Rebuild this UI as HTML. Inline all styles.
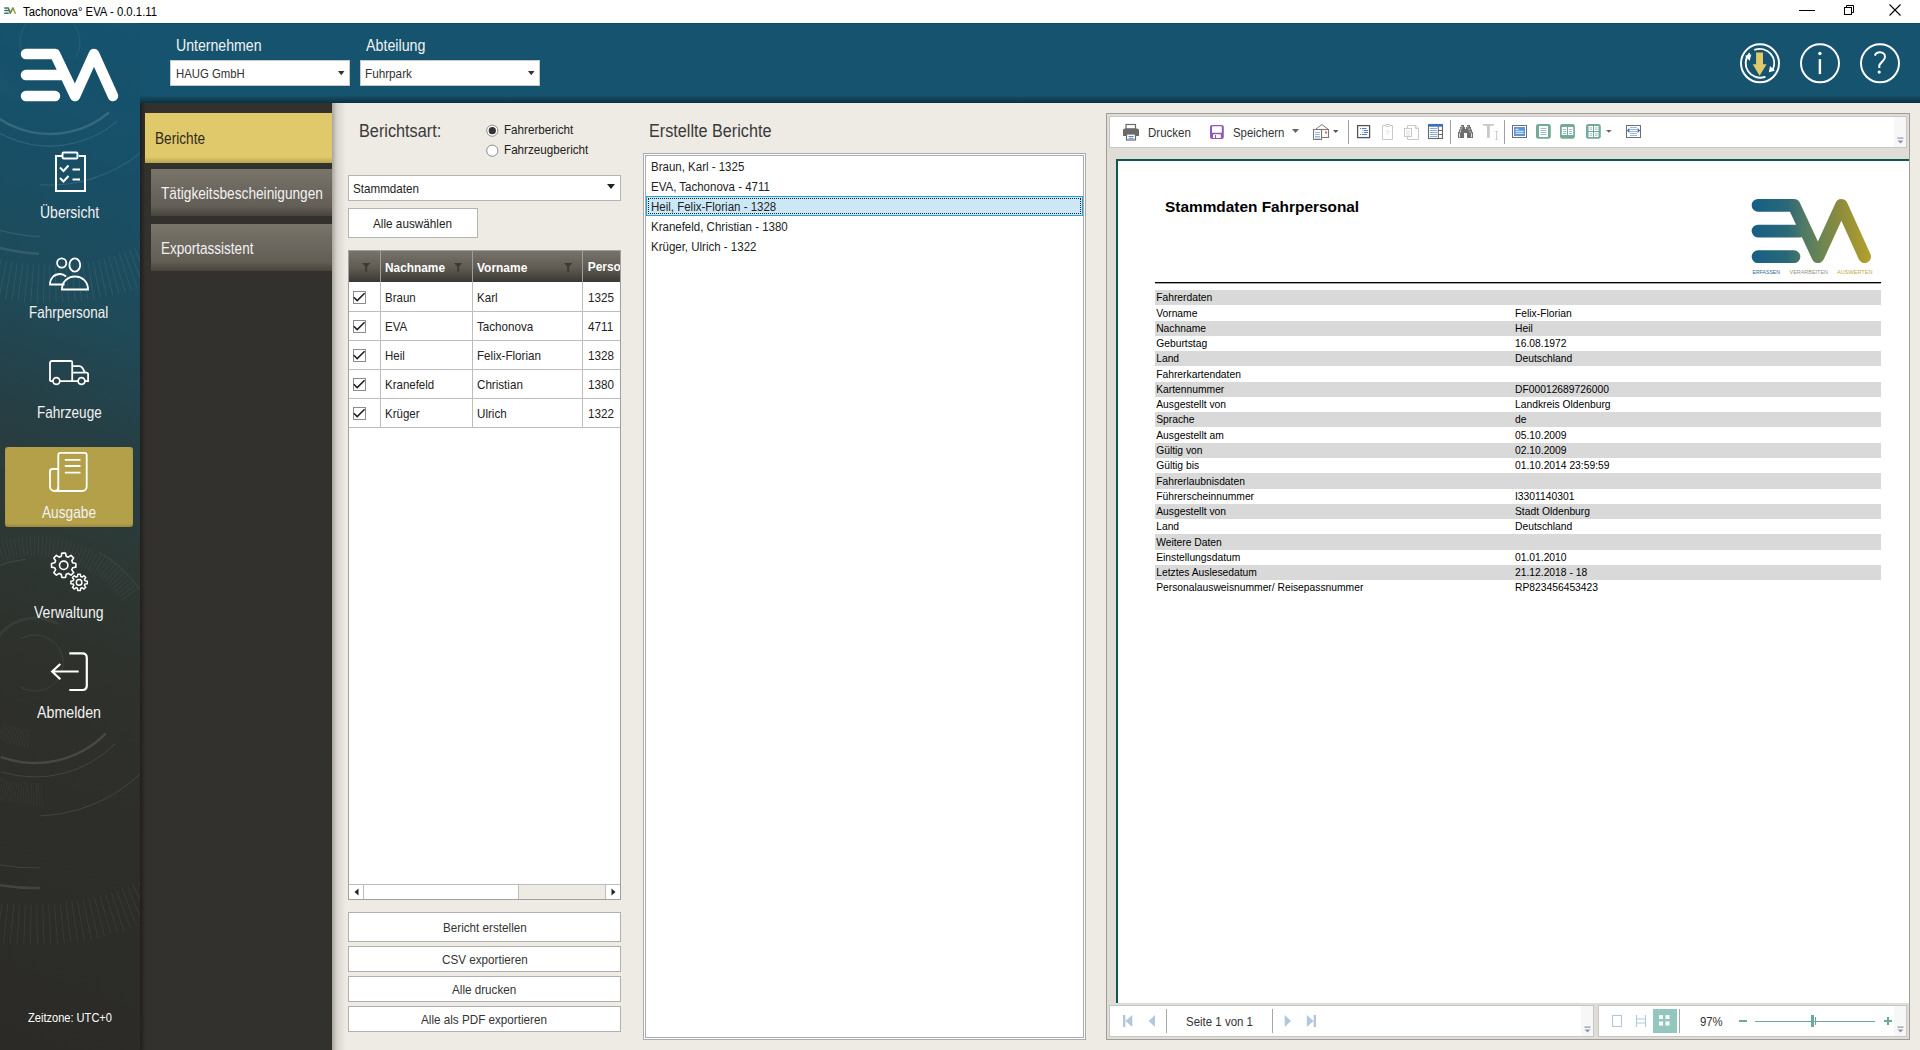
<!DOCTYPE html>
<html><head><meta charset="utf-8">
<style>
*{margin:0;padding:0;box-sizing:border-box}
html,body{width:1920px;height:1050px;overflow:hidden;background:#eeebe5;font-family:"Liberation Sans",sans-serif;}
.a{position:absolute}
.t{position:absolute;white-space:nowrap;line-height:1}
svg{overflow:visible}
</style></head><body>
<div class="a" style="left:0px;top:0px;width:1920px;height:23px;background:#fff"></div>
<div class="a" style="left:0px;top:23px;width:1920px;height:80px;background:#15536e"></div>
<div class="a" style="left:0px;top:23px;width:1920px;height:1px;background:#0f4a61"></div>
<div class="a" style="left:140px;top:95px;width:1780px;height:8px;background:linear-gradient(#17546e,#103f52 60%,#0b3242)"></div>
<div class="a" style="left:0px;top:23px;width:140px;height:1027px;background:linear-gradient(200deg,#15536e 0px,#175069 130px,#1f4a58 290px,#263f45 400px,#2d3834 510px,#2e302b 640px,#2b2a27 1013px)"></div>
<svg class="a" style="left:0px;top:0px;clip-path:inset(23px 0 0 0)" width="140" height="1050" viewBox="0 0 140 1050"><g><path d="M24.0 57.0A30 30 0 1 1 76.0 57.0" fill="none" stroke="#fff" stroke-opacity="0.07" stroke-width="1"/><path d="M13.3 94.4A64 64 0 0 1 -13.8 36.4" fill="none" stroke="#fff" stroke-opacity="0.05" stroke-width="12" stroke-dasharray="0.7 2.2"/><path d="M109.1 112.5A92 92 0 0 1 -40.6 58.0" fill="none" stroke="#fff" stroke-opacity="0.14" stroke-width="2.4"/><path d="M116.8 121.7A104 104 0 0 1 -50.5 68.9" fill="none" stroke="#fff" stroke-opacity="0.12" stroke-width="1.1"/><path d="M140.0 153.1A143 143 0 0 1 40.0 184.7" fill="none" stroke="#fff" stroke-opacity="0.11" stroke-width="1.1"/><path d="M39.8 236.7A195 195 0 0 1 -16.7 225.2" fill="none" stroke="#fff" stroke-opacity="0.1" stroke-width="1.2"/><path d="M38.9 253.7A212 212 0 0 1 -22.5 241.2" fill="none" stroke="#fff" stroke-opacity="0.11" stroke-width="2.5"/><path d="M188.8 240.2A242 242 0 0 1 -12.6 275.8" fill="none" stroke="#fff" stroke-opacity="0.08" stroke-width="38" stroke-dasharray="0.9 5"/><path d="M197.7 16.0A150 150 0 0 1 191.0 93.3" fill="none" stroke="#fff" stroke-opacity="0.07" stroke-width="1"/><path d="M-66.3 604.5A117 117 0 0 1 130.8 595.9" fill="none" stroke="#fff" stroke-opacity="0.06" stroke-width="20" stroke-dasharray="0.8 3"/><path d="M-68.6 653.9A104 104 0 0 1 25.9 559.4" fill="none" stroke="#fff" stroke-opacity="0.09" stroke-width="1"/><path d="M99.0 552.1A128 128 0 0 1 158.6 696.1" fill="none" stroke="#fff" stroke-opacity="0.09" stroke-width="1"/><path d="M151.3 581.6A142 142 0 0 1 163.7 723.0" fill="none" stroke="#fff" stroke-opacity="0.08" stroke-width="1"/><path d="M21.0 638.8A28 28 0 1 1 21.0 687.2" fill="none" stroke="#fff" stroke-opacity="0.08" stroke-width="1"/><path d="M-9.3 655.2A45 45 0 0 1 57.5 624.0" fill="none" stroke="#fff" stroke-opacity="0.05" stroke-width="3"/><path d="M28.4 738.7A76 76 0 0 1 -0.7 730.1" fill="none" stroke="#fff" stroke-opacity="0.06" stroke-width="18" stroke-dasharray="0.6 2"/><path d="M105.7 733.7A100 100 0 0 1 0.8 757.0" fill="none" stroke="#fff" stroke-opacity="0.12" stroke-width="2.5"/><path d="M115.6 743.6A114 114 0 0 1 1.7 772.0" fill="none" stroke="#fff" stroke-opacity="0.1" stroke-width="1"/><path d="M41.9 793.8A131 131 0 0 1 -3.3 788.3" fill="none" stroke="#fff" stroke-opacity="0.06" stroke-width="22" stroke-dasharray="0.6 2"/><path d="M167.5 739.5A153 153 0 0 1 40.3 815.9" fill="none" stroke="#fff" stroke-opacity="0.1" stroke-width="1"/><path d="M40.4 867.9A205 205 0 0 1 -0.6 864.9" fill="none" stroke="#fff" stroke-opacity="0.09" stroke-width="1"/><path d="M40.1 887.9A225 225 0 0 1 -4.1 884.6" fill="none" stroke="#fff" stroke-opacity="0.11" stroke-width="2.5"/><path d="M185.3 877.6A262 262 0 0 1 -1.5 922.5" fill="none" stroke="#fff" stroke-opacity="0.07" stroke-width="40" stroke-dasharray="0.8 5.5"/></g></svg>
<div class="a" style="left:140px;top:103px;width:192px;height:947px;background:#33312d"></div>
<div class="a" style="left:140px;top:103px;width:5px;height:947px;background:linear-gradient(90deg,#221f1d,#2a2724 60%,#33312d)"></div>
<div class="a" style="left:332px;top:103px;width:1588px;height:947px;background:#eeebe5"></div>
<div class="a" style="left:332px;top:103px;width:14px;height:947px;background:linear-gradient(90deg,#a9a59c,#d8d5ce 35%,#eeebe5)"></div>
<div class="t" style="left:23.00px;top:6.00px;font-size:12.71px;color:#000;font-weight:normal;transform:scaleX(0.8933);transform-origin:0 0;">Tachonova° EVA - 0.0.1.11</div>
<svg class="a" style="left:0px;top:0px;" width="20" height="20" viewBox="0 0 20 20"><defs><linearGradient id="tg" x1="4" y1="0" x2="16" y2="0" gradientUnits="userSpaceOnUse"><stop offset="0" stop-color="#2f6f8c"/><stop offset="0.45" stop-color="#4f7a58"/><stop offset="0.7" stop-color="#7d8a3a"/><stop offset="1" stop-color="#b6a432"/></linearGradient></defs><path d="M4.8 7.9H8.3L10.3 13.2L12.9 7.9L15.3 13.2M4.8 10.6H9.3M4.8 13.2H8.3" fill="none" stroke="url(#tg)" stroke-width="1.5" stroke-linecap="round" stroke-linejoin="round"/></svg>
<div class="a" style="left:1799px;top:10px;width:16px;height:1px;background:#000"></div>
<svg class="a" style="left:1844px;top:5px;" width="11" height="11" viewBox="0 0 11 11"><rect x="0.5" y="2.5" width="7" height="7" fill="none" stroke="#000"/><path d="M2.5 2.5V0.5H9.5V7.5H7.5" fill="none" stroke="#000"/></svg>
<svg class="a" style="left:1889px;top:4px;" width="12" height="12" viewBox="0 0 12 12"><path d="M0.5 0.5L11.5 11.5M11.5 0.5L0.5 11.5" stroke="#000" stroke-width="1.1"/></svg>
<svg class="a" style="left:0px;top:23px;" width="140" height="80" viewBox="0 0 140 80"><path d="M26 31H55L75 73L94 31L113 73M26 52H65M26 73H55" fill="none" stroke="#fff" stroke-width="10.5" stroke-linecap="round" stroke-linejoin="round"/></svg>
<div class="t" style="left:175.50px;top:38.00px;font-size:15.86px;color:#f2f2f2;font-weight:normal;transform:scaleX(0.8898);transform-origin:0 0;">Unternehmen</div>
<div class="t" style="left:365.60px;top:38.00px;font-size:15.86px;color:#f2f2f2;font-weight:normal;transform:scaleX(0.8982);transform-origin:0 0;">Abteilung</div>
<div class="a" style="left:170px;top:60px;width:180px;height:26px;background:#fff;border:1px solid #c9c9c9"></div>
<div class="t" style="left:175.60px;top:68.00px;font-size:12.57px;color:#333;font-weight:normal;transform:scaleX(0.9043);transform-origin:0 0;">HAUG GmbH</div>
<svg class="a" style="left:337.5px;top:70.5px;" width="8" height="5" viewBox="0 0 8 5"><path d="M0 0H6.5L3.25 4.3Z" fill="#333"/></svg>
<div class="a" style="left:360px;top:60px;width:180px;height:26px;background:#fff;border:1px solid #c9c9c9"></div>
<div class="t" style="left:365.00px;top:68.00px;font-size:12.57px;color:#333;font-weight:normal;transform:scaleX(0.9330);transform-origin:0 0;">Fuhrpark</div>
<svg class="a" style="left:527.5px;top:70.5px;" width="8" height="5" viewBox="0 0 8 5"><path d="M0 0H6.5L3.25 4.3Z" fill="#333"/></svg>
<svg class="a" style="left:1739px;top:42px;" width="42" height="42" viewBox="0 0 42 42"><circle cx="21" cy="21.3" r="19" fill="none" stroke="#fff" stroke-width="2"/></svg>
<svg class="a" style="left:1799px;top:42px;" width="42" height="42" viewBox="0 0 42 42"><circle cx="21" cy="21.3" r="19" fill="none" stroke="#fff" stroke-width="2"/></svg>
<svg class="a" style="left:1859px;top:42px;" width="42" height="42" viewBox="0 0 42 42"><circle cx="21" cy="21.3" r="19" fill="none" stroke="#fff" stroke-width="2"/></svg>
<svg class="a" style="left:1739px;top:42px;" width="42" height="42" viewBox="0 0 42 42"><g transform="translate(0,0.45)"><path d="M16.04 7.22A14.5 14.5 0 0 1 33.9 27" fill="none" stroke="#fff" stroke-width="1.9" stroke-linecap="round"/><path d="M29.8 29.8L31 23.5 35.8 28.3Z" fill="#fff"/><path d="M25.72 34.56A14.5 14.5 0 0 1 10.2 11.3" fill="none" stroke="#fff" stroke-width="1.9" stroke-linecap="round"/><path d="M12.3 12L6 13.3 10.6 18.4Z" fill="#fff"/><path d="M17.1 10.1H24V21.8H27.6L20.6 33.4 13.7 21.8H17.1Z" fill="#e0c96a"/></g></svg>
<svg class="a" style="left:1799px;top:42px;" width="42" height="42" viewBox="0 0 42 42"><circle cx="20.9" cy="11.5" r="1.7" fill="#fff"/><rect x="19.7" y="17.2" width="2.4" height="14.9" fill="#fff"/></svg>
<svg class="a" style="left:1859px;top:42px;" width="42" height="42" viewBox="0 0 42 42"><path d="M15.9 13.6C16.6 11.2 18.5 10.3 21 10.3C23.9 10.3 26 12.2 26 14.9C26 18.2 22.3 19.5 20.3 23.2V25.9" fill="none" stroke="#fff" stroke-width="2"/><circle cx="20.2" cy="30.1" r="1.6" fill="#fff"/></svg>
<div class="a" style="left:5px;top:447px;width:128px;height:80px;background:#b3a048;border-radius:3px;box-shadow:inset 0 -2px 2px rgba(0,0,0,0.12)"></div>
<svg class="a" style="left:50px;top:148px;" width="40" height="48" viewBox="0 0 40 48"><path d="M12 8H6V43H35V8H29" fill="none" stroke="#fff" stroke-width="2"/><rect x="12.5" y="4.5" width="15" height="6" rx="1.2" fill="none" stroke="#fff" stroke-width="2"/><path d="M10 19.5L13.5 23 18.5 17.5M10 30L13.5 33.5 18.5 28" fill="none" stroke="#fff" stroke-width="2"/><path d="M22.5 21.5H30M22.5 31.5H30" stroke="#fff" stroke-width="2"/></svg>
<div class="t" style="left:39.70px;top:205.00px;font-size:15.86px;color:#f2f2f2;font-weight:normal;transform:scaleX(0.8823);transform-origin:0 0;">Übersicht</div>
<svg class="a" style="left:45px;top:250px;" width="50" height="45" viewBox="0 0 50 45"><circle cx="16.7" cy="13" r="4.6" fill="none" stroke="#fff" stroke-width="1.8"/><ellipse cx="29.8" cy="15" rx="5.4" ry="6.6" fill="none" stroke="#fff" stroke-width="1.8"/><path d="M21 26.5C19 24.5 17 24 15 24C9 24 5 28.5 5 34.5H19.5" fill="none" stroke="#fff" stroke-width="1.8"/><path d="M17 39.5C17 32 22.5 26.5 30 26.5C37.5 26.5 43 32 43 39.5Z" fill="none" stroke="#fff" stroke-width="1.8"/></svg>
<div class="t" style="left:29.40px;top:305.00px;font-size:15.86px;color:#f2f2f2;font-weight:normal;transform:scaleX(0.8486);transform-origin:0 0;">Fahrpersonal</div>
<svg class="a" style="left:45px;top:355px;" width="50" height="35" viewBox="0 0 50 35"><path d="M5 26.2V8C5 6.8 5.8 6 7 6H26C26.8 6 27.2 6.6 27.2 7.5V26.2" fill="none" stroke="#fff" stroke-width="1.8"/><path d="M27.2 11.2H34.5C36 11.2 37 12 37.8 13.5L40 17.6H41.5C42.5 17.6 43.1 18.5 43.1 19.5V26.2H40M33 26.2H15M8 26.2H5M27.2 17.6H40" fill="none" stroke="#fff" stroke-width="1.8"/><circle cx="11.4" cy="26" r="3.4" fill="none" stroke="#fff" stroke-width="1.8"/><circle cx="36.5" cy="26" r="3.4" fill="none" stroke="#fff" stroke-width="1.8"/></svg>
<div class="t" style="left:36.70px;top:405.00px;font-size:15.86px;color:#f2f2f2;font-weight:normal;transform:scaleX(0.8533);transform-origin:0 0;">Fahrzeuge</div>
<svg class="a" style="left:45px;top:448px;" width="50" height="50" viewBox="0 0 50 50"><path d="M13.3 43V7C13.3 5.7 14.3 4.8 15.5 4.8H39.5C40.8 4.8 41.7 5.7 41.7 7V38.5C41.7 41 39.7 43 37.2 43H9.5C7 43 5 41 5 38.5V23.5C5 22 6 21 7.5 21H13.3" fill="none" stroke="#fff" stroke-width="1.8"/><path d="M13.3 38.5C13.3 41 11.5 43 9.5 43" fill="none" stroke="#fff" stroke-width="1.8"/><path d="M19.8 11.9H35.5M19.8 18H35.5M19.8 24.6H35.5" stroke="#fff" stroke-width="1.8"/></svg>
<div class="t" style="left:42.00px;top:505.00px;font-size:15.86px;color:#f2f2f2;font-weight:normal;transform:scaleX(0.8625);transform-origin:0 0;">Ausgabe</div>
<svg class="a" style="left:45px;top:545px;" width="55" height="60" viewBox="0 0 55 60"><path d="M27.66 17.82 L30.86 18.45 L30.86 22.15 L27.66 22.78 L26.79 24.88 L28.61 27.59 L25.99 30.21 L23.28 28.39 L21.18 29.26 L20.55 32.46 L16.85 32.46 L16.22 29.26 L14.12 28.39 L11.41 30.21 L8.79 27.59 L10.61 24.88 L9.74 22.78 L6.54 22.15 L6.54 18.45 L9.74 17.82 L10.61 15.72 L8.79 13.01 L11.41 10.39 L14.12 12.21 L16.22 11.34 L16.85 8.14 L20.55 8.14 L21.18 11.34 L23.28 12.21 L25.99 10.39 L28.61 13.01 L26.79 15.72Z" fill="none" stroke="#fff" stroke-width="1.6" stroke-linejoin="round"/><circle cx="18.7" cy="20.3" r="4.2" fill="none" stroke="#fff" stroke-width="1.6"/><path d="M39.98 35.77 L42.31 36.15 L42.31 38.65 L39.98 39.03 L39.41 40.41 L40.79 42.32 L39.02 44.09 L37.11 42.71 L35.73 43.28 L35.35 45.61 L32.85 45.61 L32.47 43.28 L31.09 42.71 L29.18 44.09 L27.41 42.32 L28.79 40.41 L28.22 39.03 L25.89 38.65 L25.89 36.15 L28.22 35.77 L28.79 34.39 L27.41 32.48 L29.18 30.71 L31.09 32.09 L32.47 31.52 L32.85 29.19 L35.35 29.19 L35.73 31.52 L37.11 32.09 L39.02 30.71 L40.79 32.48 L39.41 34.39Z" fill="none" stroke="#fff" stroke-width="1.5" stroke-linejoin="round"/><circle cx="34.1" cy="37.4" r="2.8" fill="none" stroke="#fff" stroke-width="1.5"/></svg>
<div class="t" style="left:34.00px;top:605.00px;font-size:15.86px;color:#f2f2f2;font-weight:normal;transform:scaleX(0.8857);transform-origin:0 0;">Verwaltung</div>
<svg class="a" style="left:45px;top:645px;" width="50" height="50" viewBox="0 0 50 50"><path d="M24.3 8.3H37.3C40 8.3 41.8 10 41.8 12.8V40.5C41.8 43.3 40 45 37.3 45H24.3" fill="none" stroke="#fff" stroke-width="2.2"/><path d="M33.7 26.5H7M15.3 19L7.2 26.5 15.3 34.3" fill="none" stroke="#fff" stroke-width="2.2"/></svg>
<div class="t" style="left:37.00px;top:705.00px;font-size:15.86px;color:#f2f2f2;font-weight:normal;transform:scaleX(0.8962);transform-origin:0 0;">Abmelden</div>
<div class="t" style="left:28.00px;top:1012.00px;font-size:12.71px;color:#fff;font-weight:normal;transform:scaleX(0.8716);transform-origin:0 0;">Zeitzone: UTC+0</div>
<div class="a" style="left:145px;top:113px;width:187px;height:50px;background:linear-gradient(180deg,#e0c96a 0,#e0c96a 88%,#b8a352 100%)"></div>
<div class="t" style="left:155.00px;top:131.00px;font-size:15.71px;color:#2e2a20;font-weight:normal;transform:scaleX(0.8680);transform-origin:0 0;">Berichte</div>
<div class="a" style="left:151px;top:169px;width:181px;height:47px;background:linear-gradient(180deg,#79746a 0%,#625e55 80%,#47443d 100%)"></div>
<div class="t" style="left:160.60px;top:186.00px;font-size:15.71px;color:#f2f2f2;font-weight:normal;transform:scaleX(0.8707);transform-origin:0 0;">Tätigkeitsbescheinigungen</div>
<div class="a" style="left:151px;top:224px;width:181px;height:47px;background:linear-gradient(180deg,#79746a 0%,#625e55 80%,#47443d 100%)"></div>
<div class="t" style="left:160.60px;top:241.00px;font-size:15.71px;color:#f2f2f2;font-weight:normal;transform:scaleX(0.8607);transform-origin:0 0;">Exportassistent</div>
<div class="t" style="left:358.75px;top:122.00px;font-size:18.71px;color:#3a3a3a;font-weight:normal;transform:scaleX(0.8703);transform-origin:0 0;">Berichtsart:</div>
<svg class="a" style="left:485px;top:124px;" width="14" height="14" viewBox="0 0 14 14"><circle cx="7.3" cy="6.7" r="5.6" fill="#fff" stroke="#8a8a8a" stroke-width="1"/><circle cx="7.3" cy="6.7" r="3.6" fill="#333"/></svg>
<div class="t" style="left:504.00px;top:124.00px;font-size:12.29px;color:#222;font-weight:normal;transform:scaleX(0.9489);transform-origin:0 0;">Fahrerbericht</div>
<svg class="a" style="left:485px;top:144px;" width="14" height="14" viewBox="0 0 14 14"><circle cx="7.3" cy="6.7" r="5.6" fill="#fff" stroke="#8a8a8a" stroke-width="1"/></svg>
<div class="t" style="left:504.00px;top:144.00px;font-size:12.29px;color:#222;font-weight:normal;transform:scaleX(0.9499);transform-origin:0 0;">Fahrzeugbericht</div>
<div class="a" style="left:348px;top:175px;width:273px;height:26px;background:#fff;border:1px solid #b4b4b4"></div>
<div class="t" style="left:353.30px;top:183.00px;font-size:12.57px;color:#222;font-weight:normal;transform:scaleX(0.9267);transform-origin:0 0;">Stammdaten</div>
<svg class="a" style="left:607px;top:184px;" width="9" height="6" viewBox="0 0 9 6"><path d="M0 0H8L4 5Z" fill="#222"/></svg>
<div class="a" style="left:348px;top:208px;width:130px;height:30px;background:#fff;border:1px solid #b4b4b4"></div>
<div class="t" style="left:373.30px;top:218.00px;font-size:12.57px;color:#222;font-weight:normal;transform:scaleX(0.9349);transform-origin:0 0;">Alle auswählen</div>
<div class="a" style="left:348px;top:250px;width:273px;height:650px;background:#fff;border:1px solid #a0a0a0"></div>
<div class="a" style="left:349px;top:251px;width:271px;height:31px;background:linear-gradient(180deg,#77726a 0%,#5f5b53 55%,#3b3833 100%)"></div>
<div class="a" style="left:380px;top:251px;width:1px;height:31px;background:#a09d98"></div>
<div class="a" style="left:472px;top:251px;width:1px;height:31px;background:#a09d98"></div>
<div class="a" style="left:582px;top:251px;width:1px;height:31px;background:#a09d98"></div>
<svg class="a" style="left:362px;top:263px;" width="10" height="10" viewBox="0 0 10 10"><path d="M0 0H8.4L5.2 3.6V8.7H3.2V3.6Z" fill="#3c3a36"/></svg>
<svg class="a" style="left:454px;top:263px;" width="10" height="10" viewBox="0 0 10 10"><path d="M0 0H8.4L5.2 3.6V8.7H3.2V3.6Z" fill="#3c3a36"/></svg>
<svg class="a" style="left:564px;top:263px;" width="10" height="10" viewBox="0 0 10 10"><path d="M0 0H8.4L5.2 3.6V8.7H3.2V3.6Z" fill="#3c3a36"/></svg>
<div class="t" style="left:385.00px;top:262.00px;font-size:12.57px;color:#fff;font-weight:bold;transform:scaleX(0.9443);transform-origin:0 0;">Nachname</div>
<div class="t" style="left:477.00px;top:262.00px;font-size:12.57px;color:#fff;font-weight:bold;transform:scaleX(0.9522);transform-origin:0 0;">Vorname</div>
<div class="a" style="left:583px;top:251px;width:37px;height:32px;overflow:hidden"><div class="t" style="left:4.7px;top:10.83px;font-size:11.96px;color:#fff;font-weight:bold">Personalnummer</div></div>
<div class="a" style="left:349px;top:311px;width:271px;height:1px;background:#bdbdbd"></div>
<div class="a" style="left:380px;top:282px;width:1px;height:30px;background:#bdbdbd"></div>
<div class="a" style="left:472px;top:282px;width:1px;height:30px;background:#bdbdbd"></div>
<div class="a" style="left:582px;top:282px;width:1px;height:30px;background:#bdbdbd"></div>
<svg class="a" style="left:353px;top:291px;" width="14" height="14" viewBox="0 0 14 14"><rect x="0.5" y="0.5" width="12" height="12" fill="#fff" stroke="#8c8c8c"/><path d="M0.8 6.3L4.2 9.6 11.6 2.3" fill="none" stroke="#1e1e1e" stroke-width="1.5"/></svg>
<div class="t" style="left:385.00px;top:292.00px;font-size:12.57px;color:#222;font-weight:normal;transform:scaleX(0.9150);transform-origin:0 0;">Braun</div>
<div class="t" style="left:477.00px;top:292.00px;font-size:12.57px;color:#222;font-weight:normal;transform:scaleX(0.9250);transform-origin:0 0;">Karl</div>
<div class="t" style="left:587.50px;top:292.00px;font-size:12.57px;color:#222;font-weight:normal;transform:scaleX(0.9300);transform-origin:0 0;">1325</div>
<div class="a" style="left:349px;top:340px;width:271px;height:1px;background:#bdbdbd"></div>
<div class="a" style="left:380px;top:311px;width:1px;height:30px;background:#bdbdbd"></div>
<div class="a" style="left:472px;top:311px;width:1px;height:30px;background:#bdbdbd"></div>
<div class="a" style="left:582px;top:311px;width:1px;height:30px;background:#bdbdbd"></div>
<svg class="a" style="left:353px;top:320px;" width="14" height="14" viewBox="0 0 14 14"><rect x="0.5" y="0.5" width="12" height="12" fill="#fff" stroke="#8c8c8c"/><path d="M0.8 6.3L4.2 9.6 11.6 2.3" fill="none" stroke="#1e1e1e" stroke-width="1.5"/></svg>
<div class="t" style="left:385.00px;top:321.00px;font-size:12.57px;color:#222;font-weight:normal;transform:scaleX(0.9150);transform-origin:0 0;">EVA</div>
<div class="t" style="left:477.00px;top:321.00px;font-size:12.57px;color:#222;font-weight:normal;transform:scaleX(0.9250);transform-origin:0 0;">Tachonova</div>
<div class="t" style="left:587.50px;top:321.00px;font-size:12.57px;color:#222;font-weight:normal;transform:scaleX(0.9300);transform-origin:0 0;">4711</div>
<div class="a" style="left:349px;top:369px;width:271px;height:1px;background:#bdbdbd"></div>
<div class="a" style="left:380px;top:340px;width:1px;height:30px;background:#bdbdbd"></div>
<div class="a" style="left:472px;top:340px;width:1px;height:30px;background:#bdbdbd"></div>
<div class="a" style="left:582px;top:340px;width:1px;height:30px;background:#bdbdbd"></div>
<svg class="a" style="left:353px;top:349px;" width="14" height="14" viewBox="0 0 14 14"><rect x="0.5" y="0.5" width="12" height="12" fill="#fff" stroke="#8c8c8c"/><path d="M0.8 6.3L4.2 9.6 11.6 2.3" fill="none" stroke="#1e1e1e" stroke-width="1.5"/></svg>
<div class="t" style="left:385.00px;top:350.00px;font-size:12.57px;color:#222;font-weight:normal;transform:scaleX(0.9150);transform-origin:0 0;">Heil</div>
<div class="t" style="left:477.00px;top:350.00px;font-size:12.57px;color:#222;font-weight:normal;transform:scaleX(0.9250);transform-origin:0 0;">Felix-Florian</div>
<div class="t" style="left:587.50px;top:350.00px;font-size:12.57px;color:#222;font-weight:normal;transform:scaleX(0.9300);transform-origin:0 0;">1328</div>
<div class="a" style="left:349px;top:398px;width:271px;height:1px;background:#bdbdbd"></div>
<div class="a" style="left:380px;top:369px;width:1px;height:30px;background:#bdbdbd"></div>
<div class="a" style="left:472px;top:369px;width:1px;height:30px;background:#bdbdbd"></div>
<div class="a" style="left:582px;top:369px;width:1px;height:30px;background:#bdbdbd"></div>
<svg class="a" style="left:353px;top:378px;" width="14" height="14" viewBox="0 0 14 14"><rect x="0.5" y="0.5" width="12" height="12" fill="#fff" stroke="#8c8c8c"/><path d="M0.8 6.3L4.2 9.6 11.6 2.3" fill="none" stroke="#1e1e1e" stroke-width="1.5"/></svg>
<div class="t" style="left:385.00px;top:379.00px;font-size:12.57px;color:#222;font-weight:normal;transform:scaleX(0.9150);transform-origin:0 0;">Kranefeld</div>
<div class="t" style="left:477.00px;top:379.00px;font-size:12.57px;color:#222;font-weight:normal;transform:scaleX(0.9250);transform-origin:0 0;">Christian</div>
<div class="t" style="left:587.50px;top:379.00px;font-size:12.57px;color:#222;font-weight:normal;transform:scaleX(0.9300);transform-origin:0 0;">1380</div>
<div class="a" style="left:349px;top:427px;width:271px;height:1px;background:#bdbdbd"></div>
<div class="a" style="left:380px;top:398px;width:1px;height:30px;background:#bdbdbd"></div>
<div class="a" style="left:472px;top:398px;width:1px;height:30px;background:#bdbdbd"></div>
<div class="a" style="left:582px;top:398px;width:1px;height:30px;background:#bdbdbd"></div>
<svg class="a" style="left:353px;top:407px;" width="14" height="14" viewBox="0 0 14 14"><rect x="0.5" y="0.5" width="12" height="12" fill="#fff" stroke="#8c8c8c"/><path d="M0.8 6.3L4.2 9.6 11.6 2.3" fill="none" stroke="#1e1e1e" stroke-width="1.5"/></svg>
<div class="t" style="left:385.00px;top:408.00px;font-size:12.57px;color:#222;font-weight:normal;transform:scaleX(0.9150);transform-origin:0 0;">Krüger</div>
<div class="t" style="left:477.00px;top:408.00px;font-size:12.57px;color:#222;font-weight:normal;transform:scaleX(0.9250);transform-origin:0 0;">Ulrich</div>
<div class="t" style="left:587.50px;top:408.00px;font-size:12.57px;color:#222;font-weight:normal;transform:scaleX(0.9300);transform-origin:0 0;">1322</div>
<div class="a" style="left:349px;top:884px;width:271px;height:15px;background:#eeebe5;border-top:1px solid #bdbdbd"></div>
<div class="a" style="left:349px;top:884px;width:15px;height:15px;background:#fff;border-right:1px solid #bdbdbd;border-top:1px solid #bdbdbd"></div>
<svg class="a" style="left:352px;top:887px;" width="10" height="10" viewBox="0 0 10 10"><path d="M6.5 1.5V8.5L2.5 5Z" fill="#222"/></svg>
<div class="a" style="left:364px;top:884px;width:155px;height:15px;background:#fff;border-top:1px solid #bdbdbd;border-right:1px solid #bdbdbd"></div>
<div class="a" style="left:605px;top:884px;width:15px;height:15px;background:#fff;border-top:1px solid #bdbdbd;border-left:1px solid #bdbdbd"></div>
<svg class="a" style="left:608px;top:887px;" width="10" height="10" viewBox="0 0 10 10"><path d="M3.5 1.5V8.5L7.5 5Z" fill="#222"/></svg>
<div class="a" style="left:348px;top:912px;width:273px;height:30px;background:#fff;border:1px solid #b0b0b0"></div>
<div class="t" style="left:442.52px;top:922.00px;font-size:12.57px;color:#333;font-weight:normal;transform:scaleX(0.9300);transform-origin:0 0;">Bericht erstellen</div>
<div class="a" style="left:348px;top:946px;width:273px;height:26px;background:#fff;border:1px solid #b0b0b0"></div>
<div class="t" style="left:441.54px;top:954.00px;font-size:12.57px;color:#333;font-weight:normal;transform:scaleX(0.9300);transform-origin:0 0;">CSV exportieren</div>
<div class="a" style="left:348px;top:976px;width:273px;height:26px;background:#fff;border:1px solid #b0b0b0"></div>
<div class="t" style="left:452.25px;top:984.00px;font-size:12.57px;color:#333;font-weight:normal;transform:scaleX(0.9300);transform-origin:0 0;">Alle drucken</div>
<div class="a" style="left:348px;top:1006px;width:273px;height:26px;background:#fff;border:1px solid #b0b0b0"></div>
<div class="t" style="left:421.41px;top:1014.00px;font-size:12.57px;color:#333;font-weight:normal;transform:scaleX(0.9300);transform-origin:0 0;">Alle als PDF exportieren</div>
<div class="t" style="left:648.90px;top:122.00px;font-size:18.86px;color:#3a3a3a;font-weight:normal;transform:scaleX(0.8586);transform-origin:0 0;">Erstellte Berichte</div>
<div class="a" style="left:643px;top:153px;width:443px;height:887px;background:#fff;border:1px solid #ababab"></div>
<div class="a" style="left:645px;top:155px;width:439px;height:883px;background:#fff;border:1px solid #a9acb4"></div>
<div class="a" style="left:646px;top:196px;width:437px;height:20px;background:#cce8f6;border:1px solid #26a0da"></div>
<div class="a" style="left:648px;top:198px;width:433px;height:16px;border:1px dotted #222"></div>
<div class="t" style="left:651.40px;top:161.00px;font-size:12.71px;color:#222;font-weight:normal;transform:scaleX(0.9050);transform-origin:0 0;">Braun, Karl - 1325</div>
<div class="t" style="left:651.40px;top:181.00px;font-size:12.71px;color:#222;font-weight:normal;transform:scaleX(0.9050);transform-origin:0 0;">EVA, Tachonova - 4711</div>
<div class="t" style="left:651.40px;top:201.00px;font-size:12.71px;color:#222;font-weight:normal;transform:scaleX(0.9050);transform-origin:0 0;">Heil, Felix-Florian - 1328</div>
<div class="t" style="left:651.40px;top:221.00px;font-size:12.71px;color:#222;font-weight:normal;transform:scaleX(0.9050);transform-origin:0 0;">Kranefeld, Christian - 1380</div>
<div class="t" style="left:651.40px;top:241.00px;font-size:12.71px;color:#222;font-weight:normal;transform:scaleX(0.9050);transform-origin:0 0;">Krüger, Ulrich - 1322</div>
<div class="a" style="left:1106px;top:113px;width:804px;height:927px;background:#e0ddd6;border:1px solid #a09d98"></div>
<div class="a" style="left:1109px;top:116px;width:798px;height:32px;background:#fff;border:1px solid #c6c6c6"></div>
<div class="a" style="left:1894px;top:117px;width:12px;height:30px;background:#f7f7f7"></div>
<svg class="a" style="left:1897px;top:137px;" width="8" height="8" viewBox="0 0 8 8"><rect x="0.5" y="0.5" width="6" height="1.2" fill="#8d96a8"/><path d="M0.5 3.5H6.5L3.5 6.5Z" fill="#8d96a8"/></svg>
<svg class="a" style="left:1122px;top:123px;" width="18" height="18" viewBox="0 0 18 18"><rect x="4" y="1.5" width="9.5" height="4.5" fill="#fff" stroke="#6a6a6a" stroke-width="1.2"/><path d="M3 5.5H15C16.2 5.5 17 6.3 17 7.5V13H14V11H4V13H1V7.5C1 6.3 1.8 5.5 3 5.5Z" fill="#6a6a6a"/><rect x="4.5" y="11" width="9" height="6" fill="#fff" stroke="#6a6a6a" stroke-width="1.2"/><path d="M6.5 13.5H11.5M6.5 15.3H11.5" stroke="#3b7bd0" stroke-width="0.9"/></svg>
<div class="t" style="left:1147.50px;top:127.00px;font-size:12.71px;color:#333;font-weight:normal;transform:scaleX(0.9048);transform-origin:0 0;">Drucken</div>
<svg class="a" style="left:1210px;top:125px;" width="14" height="14" viewBox="0 0 14 14"><rect x="0" y="0" width="13.8" height="13.9" rx="2" fill="#8e58b8"/><rect x="2" y="1.2" width="9.8" height="6.6" rx="0.6" fill="#fff"/><rect x="3" y="9.2" width="7.8" height="3.7" rx="0.5" fill="#fff"/><rect x="5" y="10" width="1" height="3" fill="#8e58b8"/></svg>
<div class="t" style="left:1233.00px;top:127.00px;font-size:12.71px;color:#333;font-weight:normal;transform:scaleX(0.8986);transform-origin:0 0;">Speichern</div>
<svg class="a" style="left:1292px;top:129px;" width="8" height="5" viewBox="0 0 8 5"><path d="M0 0H7L3.5 4Z" fill="#666"/></svg>
<svg class="a" style="left:1312px;top:123px;" width="18" height="18" viewBox="0 0 18 18"><path d="M3.5 6.5L9.8 1.5 16.5 6.5" fill="none" stroke="#7a7a7a" stroke-width="1"/><rect x="9.5" y="6.5" width="7" height="8" fill="#fff" stroke="#7a7a7a" stroke-width="1.1"/><rect x="1.5" y="6.5" width="8" height="10" fill="#fff" stroke="#7a7a7a" stroke-width="1.1"/><path d="M3 9.5H8M3 11.5H8M3 13.5H8M3 15H8" stroke="#7fa2d6" stroke-width="0.8"/><rect x="13" y="8.5" width="2" height="2" fill="#e8603c"/></svg>
<svg class="a" style="left:1333px;top:130px;" width="7" height="4" viewBox="0 0 7 4"><path d="M0 0H5.5L2.75 3Z" fill="#555"/></svg>
<div class="a" style="left:1348px;top:120px;width:1px;height:24px;background:#a0a0a0"></div>
<svg class="a" style="left:1356px;top:124px;" width="15" height="15" viewBox="0 0 15 15"><rect x="1.6" y="1.6" width="12" height="12" fill="#fff" stroke="#555" stroke-width="1.3"/><path d="M4 4.5H5M5.8 4.5H10.5M6.5 6.5H7.3M8 6.5H12M6.5 8.5H7.3M8 8.5H12M4 10.5H5M5.8 10.5H11" stroke="#3b6fc0" stroke-width="0.9"/></svg>
<svg class="a" style="left:1381px;top:123px;" width="14" height="18" viewBox="0 0 14 18"><path d="M1.5 2.5H4.5V1.5H8.5V2.5H11.5V16.5H1.5Z" fill="#fff" stroke="#cacaca" stroke-width="1"/><path d="M4.5 3.5H8.5" stroke="#cacaca"/><text x="4" y="12" font-size="8" fill="#c9d8ec" font-family="Liberation Sans">?</text></svg>
<svg class="a" style="left:1403px;top:124px;" width="17" height="17" viewBox="0 0 17 17"><path d="M4.5 1.5H12.5L15.5 4.5V15.5H4.5Z" fill="#fff" stroke="#cacaca" stroke-width="1"/><path d="M12.5 1.5V4.5H15.5" fill="none" stroke="#cacaca"/><rect x="1.5" y="4.5" width="7" height="8" fill="#fff" stroke="#cacaca" stroke-width="1"/><path d="M3 7H7M3 9H7M3 11H7" stroke="#c9d8ec" stroke-width="0.8"/></svg>
<svg class="a" style="left:1427px;top:123px;" width="17" height="17" viewBox="0 0 17 17"><rect x="1.5" y="1.5" width="14" height="14" fill="#fff" stroke="#666" stroke-width="1.1"/><rect x="1" y="1" width="15" height="2.7" fill="#3b6fc0"/><path d="M2.8 5.5H10M2.8 7.5H10M2.8 9.5H10M2.8 11.5H10M2.8 13.5H10" stroke="#7fa2d6" stroke-width="0.9"/><path d="M11.3 3.5V15.5M11.3 7.5H15.5M11.3 11.5H15.5" stroke="#666" stroke-width="1"/></svg>
<div class="a" style="left:1450px;top:120px;width:1px;height:24px;background:#a0a0a0"></div>
<svg class="a" style="left:1458px;top:125px;" width="15" height="13" viewBox="0 0 15 13"><path d="M3 0H6V2H7V4H8V2H9V0H12V2H13V4.5H14V7H15V13H9V8H6V13H0V7H1V4.5H2V2H3Z" fill="#6f6f6f"/><rect x="3.3" y="1.2" width="1.2" height="1.2" fill="#fff" opacity="0.8"/><rect x="9.3" y="1.2" width="1.2" height="1.2" fill="#fff" opacity="0.8"/><rect x="2.4" y="3.3" width="1.2" height="1.2" fill="#fff" opacity="0.8"/><rect x="10.6" y="3.3" width="1" height="2" fill="#fff" opacity="0.8"/><rect x="1.9" y="5.5" width="1" height="2" fill="#fff" opacity="0.8"/><rect x="11.6" y="6.3" width="1.2" height="1.2" fill="#fff" opacity="0.8"/><rect x="1" y="8.3" width="1" height="4" fill="#fff" opacity="0.8"/><rect x="13" y="8.3" width="1" height="4" fill="#fff" opacity="0.8"/></svg>
<svg class="a" style="left:1482px;top:123px;" width="17" height="17" viewBox="0 0 17 17"><path d="M1 1H11.8V2.7H7.8V14.8H5V2.7H1Z" fill="#c8c8c8"/><path d="M13.3 8.5H15.8M13.3 16.5H15.8M14.55 8.5V16.5" stroke="#c0c0c0" stroke-width="0.8"/></svg>
<div class="a" style="left:1504px;top:120px;width:1px;height:24px;background:#a0a0a0"></div>
<svg class="a" style="left:1512px;top:125px;" width="15" height="13" viewBox="0 0 15 13"><rect x="0.5" y="0.5" width="14" height="12" fill="#fff" stroke="#6e6e6e" stroke-width="1"/><rect x="2" y="2" width="11" height="9" fill="#5b97dc"/><path d="M3.5 4.3H6.5M3.5 6.3H11.5M3.5 8.3H11.5" stroke="#fff" stroke-width="0.9"/></svg>
<svg class="a" style="left:1536px;top:124px;" width="15" height="15" viewBox="0 0 15 15"><rect x="0" y="0" width="14.8" height="14.8" rx="2.4" fill="#73ab96"/><rect x="3" y="2" width="9" height="11" fill="#fff"/><path d="M4.6 4.5H10.4M4.6 6.5H10.4M4.6 8.5H10.4M4.6 10.5H10.4" stroke="#8aa4c8" stroke-width="0.8"/></svg>
<svg class="a" style="left:1560px;top:124px;" width="15" height="15" viewBox="0 0 15 15"><rect x="0" y="0" width="14.9" height="14.8" rx="2.4" fill="#73ab96"/><rect x="1.8" y="3" width="5.2" height="8" fill="#fff"/><rect x="8" y="3" width="5.2" height="8" fill="#fff"/><path d="M2.8 5.5H6M2.8 7.5H6M2.8 9.5H6M9 5.5H12.2M9 7.5H12.2M9 9.5H12.2" stroke="#8aa4c8" stroke-width="0.8"/></svg>
<svg class="a" style="left:1586px;top:124px;" width="15" height="15" viewBox="0 0 15 15"><rect x="0" y="0" width="14.8" height="14.8" rx="2.4" fill="#73ab96"/><rect x="2.5" y="2" width="4.5" height="5" fill="#fff"/><rect x="8" y="2" width="4.5" height="5" fill="#fff"/><rect x="2.5" y="8" width="4.5" height="5" fill="#fff"/><rect x="8" y="8" width="4.5" height="5" fill="#fff"/><path d="M3.5 3.8H6M3.5 5.3H6M9 3.8H11.5M9 5.3H11.5M3.5 9.8H6M3.5 11.3H6M9 9.8H11.5M9 11.3H11.5" stroke="#8aa4c8" stroke-width="0.7"/></svg>
<svg class="a" style="left:1606px;top:130px;" width="7" height="4" viewBox="0 0 7 4"><path d="M0 0H5.7L2.85 2.8Z" fill="#666"/></svg>
<svg class="a" style="left:1626px;top:125px;" width="15" height="13" viewBox="0 0 15 13"><rect x="0.5" y="0.5" width="14" height="12" fill="#fff" stroke="#6e6e6e" stroke-width="1"/><path d="M4 2.5H11M3.5 4.5H11.5M3.5 6.5H11.5M4 8.5H11M4 10.5H11" stroke="#8fb0dc" stroke-width="0.9"/><path d="M0.8 5.5L3.4 3V8ZM14.2 5.5L11.6 3V8Z" fill="#3b6fc0"/></svg>
<div class="a" style="left:1116px;top:159px;width:793px;height:844px;background:#fff;border-left:2px solid #12574f;border-top:2px solid #12574f"></div>
<div class="t" style="left:1165.00px;top:198.71px;font-size:15.4px;color:#000;font-weight:bold;">Stammdaten Fahrpersonal</div>
<svg class="a" style="left:1748px;top:195px;" width="130" height="85" viewBox="0 0 130 85"><defs><linearGradient id="lg" x1="1751" y1="0" x2="1871" y2="0" gradientUnits="userSpaceOnUse"><stop offset="0" stop-color="#155f86"/><stop offset="0.3" stop-color="#2a6878"/><stop offset="0.45" stop-color="#527b63"/><stop offset="0.6" stop-color="#6e8650"/><stop offset="0.75" stop-color="#8d8d3c"/><stop offset="1" stop-color="#b5a02c"/></linearGradient></defs><g transform="translate(-1748,-195)"><path d="M1758 205.3H1794L1818 256.7L1841.4 205.3L1864.6 256.7M1758 231.1H1800M1758 256.7H1794" fill="none" stroke="url(#lg)" stroke-width="12.7" stroke-linecap="round" stroke-linejoin="round"/><text x="1752.5" y="274" font-size="5.2" fill="#2d6b8c" textLength="27.5" lengthAdjust="spacingAndGlyphs" font-family="Liberation Sans">ERFASSEN</text><text x="1789.5" y="274" font-size="5.2" fill="#8c9a82" textLength="38.5" lengthAdjust="spacingAndGlyphs" font-family="Liberation Sans">VERARBEITEN</text><text x="1837" y="274" font-size="5.2" fill="#c2ac4c" textLength="35.5" lengthAdjust="spacingAndGlyphs" font-family="Liberation Sans">AUSWERTEN</text></g></svg>
<div class="a" style="left:1155px;top:282px;width:726px;height:1px;background:#000"></div>
<div class="a" style="left:1155px;top:282.5px;width:726px;height:1px;background:rgba(0,0,0,0.35)"></div>
<div class="a" style="left:1155px;top:290.00px;width:726px;height:15.275px;background:#d9d9d9"></div>
<div class="t" style="left:1156.20px;top:293.25px;font-size:10.3px;color:#000;font-weight:normal;">Fahrerdaten</div>
<div class="t" style="left:1156.20px;top:308.52px;font-size:10.3px;color:#000;font-weight:normal;">Vorname</div>
<div class="t" style="left:1515.00px;top:308.52px;font-size:10.3px;color:#000;font-weight:normal;">Felix-Florian</div>
<div class="a" style="left:1155px;top:320.55px;width:726px;height:15.275px;background:#d9d9d9"></div>
<div class="t" style="left:1156.20px;top:323.80px;font-size:10.3px;color:#000;font-weight:normal;">Nachname</div>
<div class="t" style="left:1515.00px;top:323.80px;font-size:10.3px;color:#000;font-weight:normal;">Heil</div>
<div class="t" style="left:1156.20px;top:339.07px;font-size:10.3px;color:#000;font-weight:normal;">Geburtstag</div>
<div class="t" style="left:1515.00px;top:339.07px;font-size:10.3px;color:#000;font-weight:normal;">16.08.1972</div>
<div class="a" style="left:1155px;top:351.10px;width:726px;height:15.275px;background:#d9d9d9"></div>
<div class="t" style="left:1156.20px;top:354.35px;font-size:10.3px;color:#000;font-weight:normal;">Land</div>
<div class="t" style="left:1515.00px;top:354.35px;font-size:10.3px;color:#000;font-weight:normal;">Deutschland</div>
<div class="t" style="left:1156.20px;top:369.62px;font-size:10.3px;color:#000;font-weight:normal;">Fahrerkartendaten</div>
<div class="a" style="left:1155px;top:381.65px;width:726px;height:15.275px;background:#d9d9d9"></div>
<div class="t" style="left:1156.20px;top:384.89px;font-size:10.3px;color:#000;font-weight:normal;">Kartennummer</div>
<div class="t" style="left:1515.00px;top:384.89px;font-size:10.3px;color:#000;font-weight:normal;">DF00012689726000</div>
<div class="t" style="left:1156.20px;top:400.17px;font-size:10.3px;color:#000;font-weight:normal;">Ausgestellt von</div>
<div class="t" style="left:1515.00px;top:400.17px;font-size:10.3px;color:#000;font-weight:normal;">Landkreis Oldenburg</div>
<div class="a" style="left:1155px;top:412.20px;width:726px;height:15.275px;background:#d9d9d9"></div>
<div class="t" style="left:1156.20px;top:415.44px;font-size:10.3px;color:#000;font-weight:normal;">Sprache</div>
<div class="t" style="left:1515.00px;top:415.44px;font-size:10.3px;color:#000;font-weight:normal;">de</div>
<div class="t" style="left:1156.20px;top:430.72px;font-size:10.3px;color:#000;font-weight:normal;">Ausgestellt am</div>
<div class="t" style="left:1515.00px;top:430.72px;font-size:10.3px;color:#000;font-weight:normal;">05.10.2009</div>
<div class="a" style="left:1155px;top:442.75px;width:726px;height:15.275px;background:#d9d9d9"></div>
<div class="t" style="left:1156.20px;top:446.00px;font-size:10.3px;color:#000;font-weight:normal;">Gültig von</div>
<div class="t" style="left:1515.00px;top:446.00px;font-size:10.3px;color:#000;font-weight:normal;">02.10.2009</div>
<div class="t" style="left:1156.20px;top:461.27px;font-size:10.3px;color:#000;font-weight:normal;">Gültig bis</div>
<div class="t" style="left:1515.00px;top:461.27px;font-size:10.3px;color:#000;font-weight:normal;">01.10.2014 23:59:59</div>
<div class="a" style="left:1155px;top:473.30px;width:726px;height:15.275px;background:#d9d9d9"></div>
<div class="t" style="left:1156.20px;top:476.55px;font-size:10.3px;color:#000;font-weight:normal;">Fahrerlaubnisdaten</div>
<div class="t" style="left:1156.20px;top:491.82px;font-size:10.3px;color:#000;font-weight:normal;">Führerscheinnummer</div>
<div class="t" style="left:1515.00px;top:491.82px;font-size:10.3px;color:#000;font-weight:normal;">I3301140301</div>
<div class="a" style="left:1155px;top:503.85px;width:726px;height:15.275px;background:#d9d9d9"></div>
<div class="t" style="left:1156.20px;top:507.10px;font-size:10.3px;color:#000;font-weight:normal;">Ausgestellt von</div>
<div class="t" style="left:1515.00px;top:507.10px;font-size:10.3px;color:#000;font-weight:normal;">Stadt Oldenburg</div>
<div class="t" style="left:1156.20px;top:522.37px;font-size:10.3px;color:#000;font-weight:normal;">Land</div>
<div class="t" style="left:1515.00px;top:522.37px;font-size:10.3px;color:#000;font-weight:normal;">Deutschland</div>
<div class="a" style="left:1155px;top:534.40px;width:726px;height:15.275px;background:#d9d9d9"></div>
<div class="t" style="left:1156.20px;top:537.64px;font-size:10.3px;color:#000;font-weight:normal;">Weitere Daten</div>
<div class="t" style="left:1156.20px;top:552.92px;font-size:10.3px;color:#000;font-weight:normal;">Einstellungsdatum</div>
<div class="t" style="left:1515.00px;top:552.92px;font-size:10.3px;color:#000;font-weight:normal;">01.01.2010</div>
<div class="a" style="left:1155px;top:564.95px;width:726px;height:15.275px;background:#d9d9d9"></div>
<div class="t" style="left:1156.20px;top:568.20px;font-size:10.3px;color:#000;font-weight:normal;">Letztes Auslesedatum</div>
<div class="t" style="left:1515.00px;top:568.20px;font-size:10.3px;color:#000;font-weight:normal;">21.12.2018 - 18</div>
<div class="t" style="left:1156.20px;top:583.47px;font-size:10.3px;color:#000;font-weight:normal;">Personalausweisnummer/ Reisepassnummer</div>
<div class="t" style="left:1515.00px;top:583.47px;font-size:10.3px;color:#000;font-weight:normal;">RP823456453423</div>
<div class="a" style="left:1109px;top:1005px;width:485px;height:32px;background:#fff;border:1px solid #c6c6c6"></div>
<div class="a" style="left:1598px;top:1005px;width:309px;height:32px;background:#fff;border:1px solid #c6c6c6"></div>
<div class="a" style="left:1894px;top:1006px;width:12px;height:30px;background:#f7f7f7"></div>
<div class="a" style="left:1581px;top:1006px;width:12px;height:30px;background:#f7f7f7"></div>
<svg class="a" style="left:1584px;top:1026px;" width="8" height="8" viewBox="0 0 8 8"><rect x="0.5" y="0.5" width="6" height="1.2" fill="#8d96a8"/><path d="M0.5 3.5H6.5L3.5 6.5Z" fill="#8d96a8"/></svg>
<svg class="a" style="left:1897px;top:1026px;" width="8" height="8" viewBox="0 0 8 8"><rect x="0.5" y="0.5" width="6" height="1.2" fill="#8d96a8"/><path d="M0.5 3.5H6.5L3.5 6.5Z" fill="#8d96a8"/></svg>
<svg class="a" style="left:1122px;top:1014px;" width="12" height="14" viewBox="0 0 12 14"><rect x="1" y="1" width="2.4" height="12" fill="#b3c7dc"/><path d="M10.3 1V13L3.5 7Z" fill="#b3c7dc"/></svg>
<svg class="a" style="left:1148px;top:1014px;" width="8" height="14" viewBox="0 0 8 14"><path d="M7 1V13L0.7 7Z" fill="#b3c7dc"/></svg>
<div class="a" style="left:1166px;top:1009px;width:1px;height:24px;background:#a8a8a8"></div>
<div class="t" style="left:1186.00px;top:1016.00px;font-size:12.57px;color:#333;font-weight:normal;transform:scaleX(0.9136);transform-origin:0 0;">Seite 1 von 1</div>
<div class="a" style="left:1272px;top:1009px;width:1px;height:24px;background:#a8a8a8"></div>
<svg class="a" style="left:1284px;top:1014px;" width="8" height="14" viewBox="0 0 8 14"><path d="M0.7 1V13L7 7Z" fill="#b3c7dc"/></svg>
<svg class="a" style="left:1306px;top:1014px;" width="12" height="14" viewBox="0 0 12 14"><path d="M0.8 1V13L7.5 7Z" fill="#b3c7dc"/><rect x="7.6" y="1" width="2.4" height="12" fill="#b3c7dc"/></svg>
<svg class="a" style="left:1611px;top:1014px;" width="12" height="14" viewBox="0 0 12 14"><rect x="1.5" y="1.5" width="9" height="11" fill="none" stroke="#b3c7dc" stroke-width="1.1"/></svg>
<svg class="a" style="left:1635px;top:1014px;" width="12" height="14" viewBox="0 0 12 14"><path d="M1.5 1V13M10.5 1V13M1.5 5H10.5M1.5 9H10.5" fill="none" stroke="#b3c7dc" stroke-width="1.1"/></svg>
<div class="a" style="left:1653px;top:1009px;width:24px;height:24px;background:#93c6bc"></div>
<svg class="a" style="left:1659px;top:1015px;" width="11" height="11" viewBox="0 0 11 11"><rect x="0" y="0" width="4" height="4" fill="#fff"/><rect x="6.5" y="0" width="4" height="4" fill="#fff"/><rect x="0" y="6.5" width="4" height="4" fill="#fff"/><rect x="6.5" y="6.5" width="4" height="4" fill="#fff"/></svg>
<div class="a" style="left:1679px;top:1009px;width:1px;height:24px;background:#a8a8a8"></div>
<div class="t" style="left:1699.50px;top:1016.00px;font-size:12.57px;color:#333;font-weight:normal;transform:scaleX(0.9028);transform-origin:0 0;">97%</div>
<div class="a" style="left:1739px;top:1020px;width:8px;height:2px;background:#6aaa9c"></div>
<div class="a" style="left:1755px;top:1020.5px;width:120px;height:1px;background:#6aaa9c"></div>
<div class="a" style="left:1811px;top:1015px;width:3px;height:12px;background:#6aaa9c"></div>
<div class="a" style="left:1815px;top:1017px;width:1px;height:8px;background:#6aaa9c"></div>
<div class="a" style="left:1884px;top:1020px;width:8px;height:2px;background:#6aaa9c"></div>
<div class="a" style="left:1887px;top:1017px;width:2px;height:8px;background:#6aaa9c"></div>
</body></html>
